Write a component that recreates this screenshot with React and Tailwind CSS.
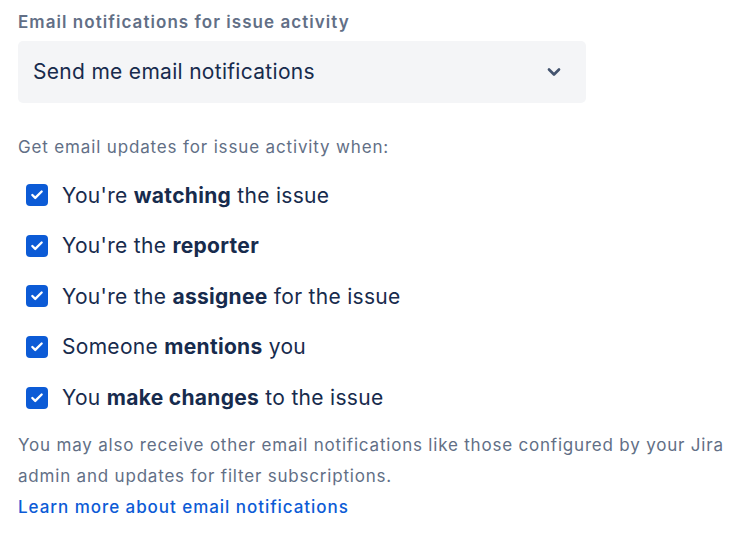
import { Check, ChevronDown } from 'lucide-react'

const options = [
    ['You\'re ', 'watching', ' the issue'],
    ['You\'re the ', 'reporter', ''],
    ['You\'re the ', 'assignee', ' for the issue'],
    ['Someone ', 'mentions', ' you'],
    ['You ', 'make changes', ' to the issue'],
]

const App = () => {
    return (
        <div className="w-[740px] h-[540px] bg-white px-[18px] pt-[10px] font-['Inter',sans-serif]">
            <h2 className="text-[17px] leading-[24px] font-semibold tracking-[1.05px] text-[#626f86]">
                Email notifications for issue activity
            </h2>

            {/* Select */}
            <div className="mt-[7px] w-[568px] h-[62px] rounded-[5px] bg-[#f4f5f7] flex items-center justify-between pl-[15px] pr-[22px]">
                <span className="text-[21px] tracking-[0.3px] text-[#172b4d]">Send me email notifications</span>
                <ChevronDown size={20} strokeWidth={3.2} className="text-[#44546f]" />
            </div>

            <p className="mt-[32px] text-[17px] leading-[24px] tracking-[0.85px] text-[#626f86]">
                Get email updates for issue activity when:
            </p>

            <div className="mt-[11px] flex flex-col pl-[8px]">
                {options.map(([pre, bold, post], idx) => (
                    <label key={idx} className="flex items-center gap-[14px] h-[50.6px]">
                        <span className="w-[22px] h-[22px] rounded-[4px] bg-[#0c5bd6] flex items-center justify-center">
                            <Check size={14} strokeWidth={4} className="text-white" />
                        </span>
                        <span className="text-[21px] tracking-[0.3px] text-[#172b4d]">
                            {pre}<b className="font-bold">{bold}</b>{post}
                        </span>
                    </label>
                ))}
            </div>

            <p className="mt-[7px] w-[726px] text-[17px] leading-[31px] tracking-[0.8px] text-[#626f86]">
                You may also receive other email notifications like those configured by your Jira admin and updates for filter subscriptions.
            </p>
            <a href="#" className="block text-[17px] leading-[31px] font-medium tracking-[0.95px] text-[#0c5bd6]">
                Learn more about email notifications
            </a>
        </div>
    )
}

export default App
